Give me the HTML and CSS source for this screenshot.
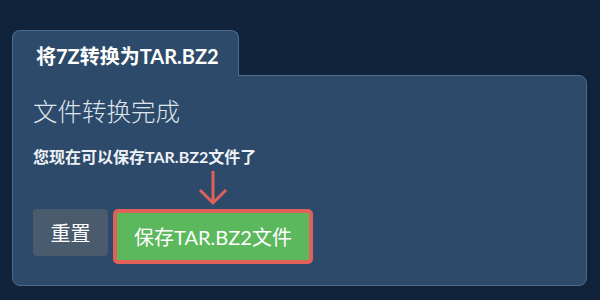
FILE: index.html
```html
<!DOCTYPE html>
<html lang="zh-CN">
<head>
  <meta charset="UTF-8">
  <meta name="viewport" content="width=device-width, initial-scale=1">
  <title>将7Z转换为TAR.BZ2</title>
  <link rel="stylesheet" href="styles.css">
</head>
<body>

<div class="converter">
  <div class="tab">将7Z转换为TAR.BZ2</div>

  <div class="panel">
    <h2 class="status">文件转换完成</h2>
    <p class="hint">您现在可以保存TAR.BZ2文件了</p>

    <div class="actions">
      <button class="btn reset">重置</button>
      <div class="save-wrap">
        <svg class="arrow" width="30" height="36" viewBox="0 0 30 36">
          <path d="M15 1 V33 M2 20 L15 33 L28 20" fill="none" stroke="#e0605a" stroke-width="3"/>
        </svg>
        <button class="btn save">保存TAR.BZ2文件</button>
      </div>
    </div>
  </div>
</div>

</body>
</html>
```

FILE: styles.css
```css
body {
  background: #10233a;
  color: #fff;
  font-family: Lato, "Noto Sans CJK SC", sans-serif;
  margin: 0;
}

.converter {
  padding: 30px 13px 0 12px;
}

.tab {
  display: inline-block;
  position: relative;
  z-index: 1;
  width: 227px;
  height: 46px;
  box-sizing: border-box;
  margin-bottom: -1px;
  padding: 13px 0 0 23px;
  background: #2d4a6a;
  border: 1px solid #4f6b8c;
  border-bottom: none;
  border-radius: 8px 8px 0 0;
  font-size: 20px;
  font-weight: bold;
  line-height: 24px;
}

.panel {
  background: #2d4a6a;
  border: 1px solid #4f6b8c;
  border-radius: 0 8px 8px 8px;
  padding: 21px 20px 21px;
}

.status {
  margin: 0;
  font-size: 24.5px;
  font-weight: 300;
  line-height: 29px;
  color: #dfe5ec;
}

.hint {
  margin: 19px 0 0;
  font-size: 16px;
  font-weight: bold;
  line-height: 23px;
  color: #eef2f6;
}

.actions {
  display: flex;
  align-items: flex-start;
  gap: 5px;
  margin-top: 41px;
}

.btn {
  border: none;
  border-radius: 4px;
  color: #fff;
  font-family: inherit;
  font-size: 20px;
  height: 47px;
  cursor: pointer;
}

.reset {
  width: 75px;
  background: #4b5b6e;
}

.save-wrap {
  position: relative;
}

.arrow {
  position: absolute;
  left: 85px;
  top: -39px;
}

.save {
  width: 200px;
  height: 55px;
  background: #5cb85c;
  border: 4px solid #e0605a;
  border-radius: 5px;
}
```
